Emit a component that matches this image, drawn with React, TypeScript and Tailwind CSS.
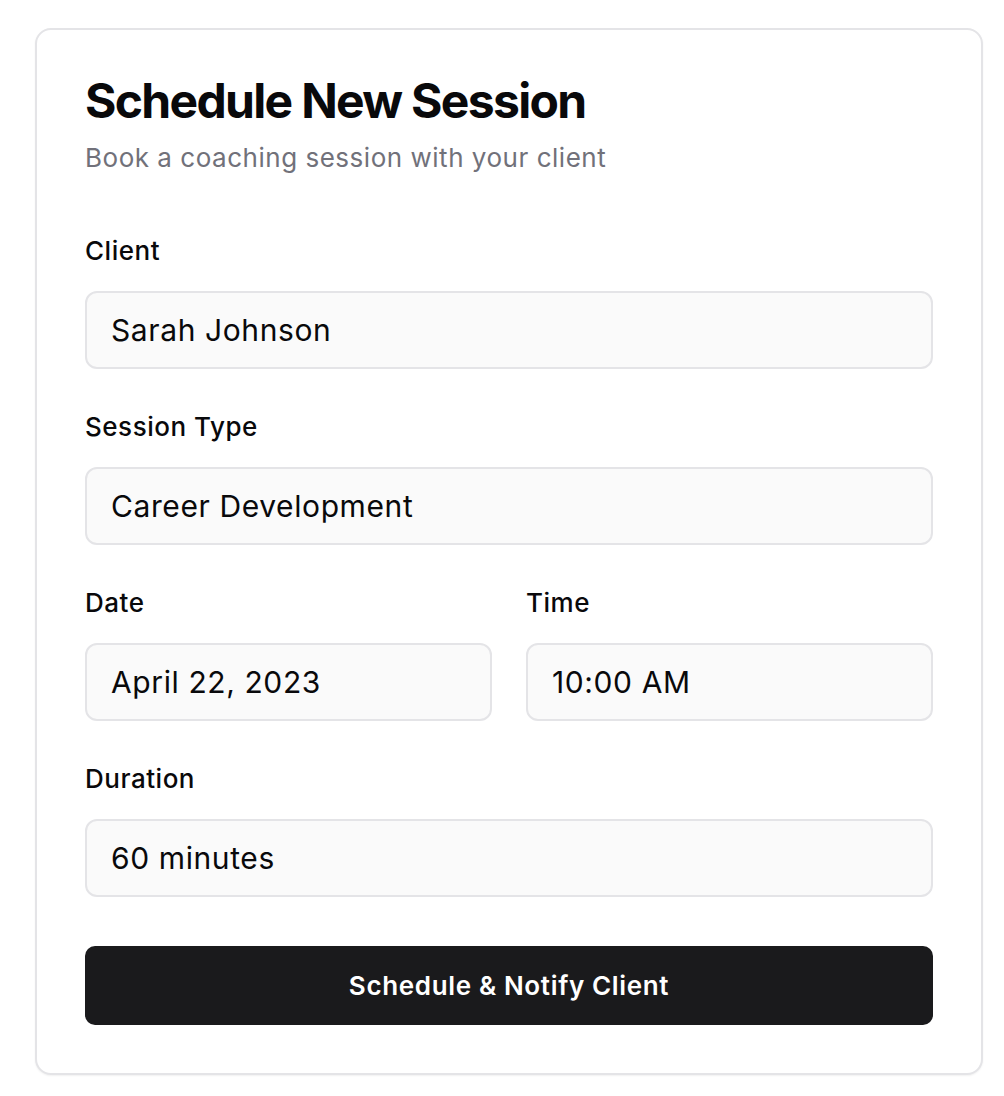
export default function App() {
  const font = { fontFamily: 'Inter, "Noto Sans", sans-serif' };

  return (
    <div className="min-h-screen bg-white pl-[35px] pt-[28px]" style={font}>
      <div className="w-[948px] rounded-[16px] border-2 border-[#e4e4e7] bg-white px-[48px] pt-[47px] pb-[48px] shadow-[0_1px_2px_rgba(0,0,0,0.06)]">
        <h1 className="text-[48px] font-bold leading-[48px] tracking-[-0.035em] text-[#09090b]">
          Schedule New Session
        </h1>
        <p className="mt-[15px] text-[26px] leading-[36px] tracking-[0.02em] text-[#71717a]">
          Book a coaching session with your client
        </p>

        <div className="mt-[57px] flex flex-col gap-[40px]">
          <Field label="Client" value="Sarah Johnson" />
          <Field label="Session Type" value="Career Development" />
          <div className="grid grid-cols-2 gap-[34px]">
            <Field label="Date" value="April 22, 2023" />
            <Field label="Time" value="10:00 AM" />
          </div>
          <Field label="Duration" value="60 minutes" />
        </div>

        <button className="mt-[49px] flex h-[79px] w-full items-center justify-center rounded-[10px] bg-[#1a1a1c] text-[26px] font-semibold tracking-[0.025em] text-white">
          Schedule &amp; Notify Client
        </button>
      </div>
    </div>
  );
}

function Field({ label, value }: { label: string; value: string }) {
  return (
    <div className="flex flex-col">
      <label className="text-[26px] font-medium leading-[36px] tracking-[0.02em] text-[#09090b]">
        {label}
      </label>
      <div className="mt-[22px] flex h-[78px] items-center rounded-[12px] border-2 border-[#e4e4e7] bg-[#fafafa] px-[24px] text-[30px] tracking-[0.02em] text-[#09090b]">
        {value}
      </div>
    </div>
  );
}
